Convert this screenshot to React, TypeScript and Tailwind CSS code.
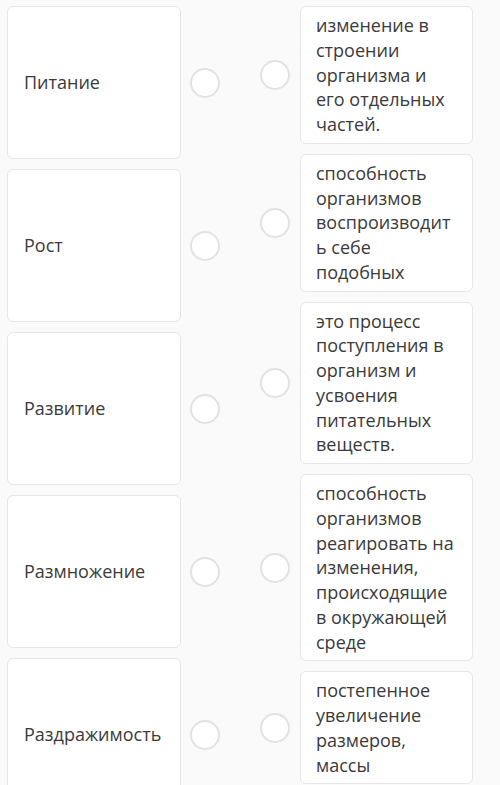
const terms = ["Питание", "Рост", "Развитие", "Размножение", "Раздражимость"];

const definitions = [
  "изменение в строении организма и его отдельных частей.",
  "способность организмов воспроизводить себе подобных",
  "это процесс поступления в организм и усвоения питательных веществ.",
  "способность организмов реагировать на изменения, происходящие в окружающей среде",
  "постепенное увеличение размеров, массы",
];

function Dot() {
  return <div className="w-[30px] h-[30px] shrink-0 rounded-full border-2 border-[#e2e2e2] bg-white" />;
}

export default function App() {
  return (
    <div
      className="w-[500px] h-[785px] overflow-hidden bg-[#fafafa] text-[#3a3a3a]"
      style={{ fontFamily: '"Open Sans", "Noto Sans", sans-serif' }}
    >
      <div className="flex items-start pl-[7px] pt-[6px]">
        {/* left column: terms */}
        <div className="flex flex-col gap-[10px]">
          {terms.map((t) => (
            <div key={t} className="flex items-center">
              <div className="w-[174px] h-[153px] flex items-center pl-[16px] rounded-md border-[1.5px] border-[#e6e6e6] bg-white text-[18px]">
                {t}
              </div>
              <div className="ml-[9px]">
                <Dot />
              </div>
            </div>
          ))}
        </div>

        {/* right column: definitions */}
        <div className="ml-[40px] flex flex-col gap-[10px]">
          {definitions.map((d, i) => (
            <div key={i} className="flex items-center">
              <Dot />
              <div className="ml-[10px] w-[173px] rounded-md border-[1.5px] border-[#e6e6e6] bg-white pl-[15px] pr-[16px] py-[6px] text-[18px] leading-[24.75px] break-words">
                {d}
              </div>
            </div>
          ))}
        </div>
      </div>
    </div>
  );
}
